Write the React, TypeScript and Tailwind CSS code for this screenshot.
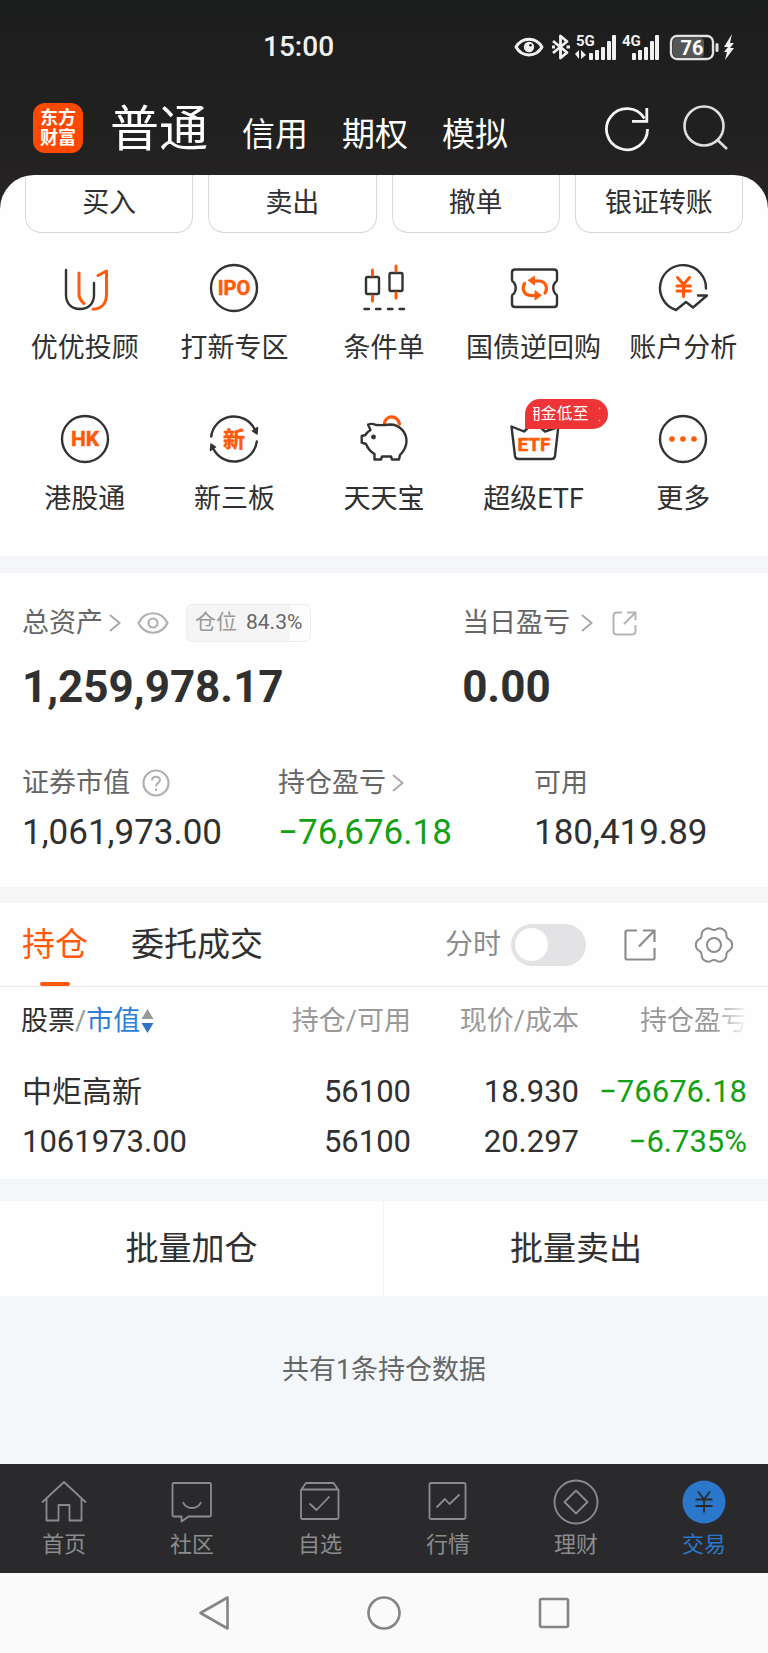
import { useState, type ReactNode } from 'react';
import clsx from 'clsx';

const INK = '#333333';
const ORANGE = '#ff5a0a';

/* ---------- status bar ---------- */

function SignalBars({ x }: { x: number }) {
  return (
    <g fill="#f1f1f1">
      <rect x={x} y={20} width={4} height={7} rx={1} />
      <rect x={x + 6} y={17} width={4} height={10} rx={1} />
      <rect x={x + 12} y={14} width={4} height={13} rx={1} />
      <rect x={x + 18} y={8} width={4} height={19} rx={1} />
      <rect x={x + 23} y={2} width={4} height={25} rx={1} />
    </g>
  );
}

function StatusBar() {
  return (
    <div className="flex h-[94px] items-center justify-between pr-[33px] pl-[263px] text-[#f1f1f1]">
      <span className="text-[28px] leading-8 font-medium">15:00</span>
      <div className="flex items-center">
        <svg width="30" height="20" viewBox="0 0 30 20" fill="none">
          <path d="M2 10C8 -0.5 22 -0.5 28 10C22 20.500 8 20.500 2 10Z" stroke="#f1f1f1" strokeWidth="3" strokeLinejoin="round" />
          <circle cx="15" cy="10" r="5.200" fill="#f1f1f1" />
          <circle cx="16.500" cy="8.200" r="1.300" fill="#1b1d1c" />
        </svg>
        <svg className="ml-[7px]" width="20" height="28" viewBox="0 0 20 28" fill="none" stroke="#f1f1f1" strokeWidth="2.800" strokeLinejoin="round">
          <path d="M2 8L16 19.500L9.500 25V3L16 8.500L2 20" />
          <path d="M1 14H4M15.500 14H19" />
        </svg>
        <svg className="ml-1" width="42" height="28" viewBox="0 0 42 28">
          <text x="1" y="13" fontSize="15" fontWeight="700" fill="#f1f1f1">5G</text>
          <path d="M0 21L4 17V26M6 17V26L11 22Z" fill="#f1f1f1" />
          <SignalBars x={14} />
        </svg>
        <svg className="ml-[5px]" width="40" height="28" viewBox="0 0 40 28">
          <text x="0" y="13" fontSize="15" fontWeight="700" fill="#f1f1f1">4G</text>
          <SignalBars x={10} />
        </svg>
        <svg className="ml-[7px]" width="50" height="28" viewBox="0 0 50 28">
          <rect x="2" y="3" width="42" height="23" rx="6" fill="#1b1d1c" stroke="#e2e2e2" strokeWidth="2.400" />
          <rect x="4" y="5" width="31" height="19" rx="4" fill="#555756" />
          <rect x="46.500" y="10" width="3" height="9" rx="1.500" fill="#e2e2e2" />
          <text x="23" y="21.500" fontSize="20" fontWeight="700" fill="#ffffff" textAnchor="middle">76</text>
        </svg>
        <svg className="ml-1" width="12" height="28" viewBox="0 0 12 28" fill="#f1f1f1">
          <path d="M9 1L1 14H5L1 19H4L2 27L11 15H7L11 10H7Z" />
        </svg>
      </div>
    </div>
  );
}

/* ---------- header ---------- */

function Header() {
  return (
    <header className="flex h-[68px] items-center pr-[40px] pl-[33px] text-white">
      <div className="grid h-[50px] w-[50px] shrink-0 content-center rounded-xl bg-[#ff4800] text-center text-[18px] leading-5 font-bold">
        <span>东方</span>
        <span>财富</span>
      </div>
      <nav className="flex items-baseline gap-[34px] pt-2 pl-[27px] text-[33px] leading-[60px] whitespace-nowrap">
        <a href="#normal" className="text-[49px]">普通</a>
        <a href="#credit">信用</a>
        <a href="#option">期权</a>
        <a href="#mock">模拟</a>
      </nav>
      <div className="ml-auto flex items-center gap-[31px]">
        <button type="button" aria-label="刷新">
          <svg width="48" height="48" viewBox="0 0 48 48" fill="none" stroke="#f5f5f5" strokeWidth="2.800">
            <path d="M44.500 25A20.500 20.500 0 1 1 41.500 14.500" />
            <path d="M43.800 4V17.300H29" />
          </svg>
        </button>
        <button type="button" aria-label="搜索">
          <svg width="46" height="48" viewBox="0 0 46 48" fill="none" stroke="#dedede" strokeWidth="2.600">
            <circle cx="22" cy="22" r="19.500" />
            <path d="M35.500 36L45 45" />
          </svg>
        </button>
      </div>
    </header>
  );
}

/* ---------- shortcuts ---------- */

function ShortcutIcon({ children }: { children: ReactNode }) {
  return (
    <svg width="56" height="56" viewBox="0 0 56 56" fill="none" stroke={INK} strokeWidth="2.400" strokeLinecap="round" strokeLinejoin="round">
      {children}
    </svg>
  );
}

function IconText({ size, y, children }: { size: number; y: number; children: string }) {
  return (
    <text x="28" y={y} fontSize={size} fontWeight="700" fill={ORANGE} stroke={ORANGE} strokeWidth="0.500" textAnchor="middle">
      {children}
    </text>
  );
}

const shortcuts: { label: string; icon: ReactNode; badge?: string }[] = [
  {
    label: '优优投顾',
    icon: (
      <>
        <path d="M9 10V35C9 44 15 49 23 49C31 49 37 44 37 35V23" />
        <g stroke={ORANGE} strokeWidth="3">
          <path d="M22 13V34C22 38 24 41 27 43.500" />
          <path d="M41 15.500L49.500 11V34C49.500 43 45 49 36 49.200" />
        </g>
      </>
    ),
  },
  {
    label: '打新专区',
    icon: (
      <>
        <circle cx="28" cy="28" r="23" />
        <IconText size={20} y={35}>IPO</IconText>
      </>
    ),
  },
  {
    label: '条件单',
    icon: (
      <>
        <rect x="10" y="17" width="13" height="17" rx="1.500" />
        <rect x="33.500" y="13" width="13" height="18" rx="1.500" />
        <path d="M16.500 10V15M16.500 36V41M40 6V11M40 33V38" stroke={ORANGE} strokeWidth="3" />
        <path d="M8.500 49H13M20 49H24.500M32 49H36.500M43.500 49H48" />
      </>
    ),
  },
  {
    label: '国债逆回购',
    icon: (
      <>
        <path d="M9 9.500H48Q51 9.500 51 12.500V20Q51 21.500 49 22.500Q45.500 28 49 33.500Q51 34.500 51 36V44Q51 47 48 47H9Q6 47 6 44V36Q6 34.500 8 33.500Q11.500 28 8 22.500Q6 21.500 6 20V12.500Q6 9.500 9 9.500Z" />
        <g stroke={ORANGE} strokeWidth="3.200">
          <path d="M18.500 23.500C15 30 19 35.500 25 35.500H29" />
          <path d="M39 33C42.500 27 39 21 33 21H28" />
        </g>
        <path d="M29 31V40L35 35.500ZM28.500 16.500V25L22.500 20.500Z" fill={ORANGE} stroke={ORANGE} strokeWidth="1" />
      </>
    ),
  },
  {
    label: '账户分析',
    icon: (
      <>
        <path d="M51 28.500A23 23 0 1 0 21 50L31 42L38 47.500L52 35.500H43" />
        <path d="M22.500 17.500L28.500 24.500L34.500 17.500M28.500 24.500V36.500M22 26H35.500M22 31H35.500" stroke={ORANGE} strokeWidth="3" />
      </>
    ),
  },
  {
    label: '港股通',
    icon: (
      <>
        <circle cx="28" cy="28" r="23" />
        <IconText size={21} y={35}>HK</IconText>
      </>
    ),
  },
  {
    label: '新三板',
    icon: (
      <>
        <path d="M5.200 25.500A23 23 0 0 1 48.500 18M50.800 30.500A23 23 0 0 1 7.500 38" />
        <path d="M46.500 20L51.500 16.500L51 23ZM9.500 36L4.500 39.500L5 33Z" fill={INK} strokeWidth="1.500" />
        <IconText size={22} y={36}>新</IconText>
      </>
    ),
  },
  {
    label: '天天宝',
    icon: (
      <>
        <path d="M28.500 12C30 4 41 3.500 43.500 13" stroke={ORANGE} strokeWidth="3.200" />
        <path d="M12 13.500Q16 12 20 14Q26 14.500 34 13.500C44 13.500 51 22 50.500 31C50 37 47 41 44 44L43 48.500H36L35 45.500H26L25 48.500H18.500V43C15 41 12 38 10 33L5.700 31.500V25L9.500 24C10.500 22 12 20.500 14.500 19C14 17 12.500 15.500 12 13.500Z" fill="#fefefe" />
        <circle cx="17.500" cy="26" r="1.800" fill={INK} stroke={INK} strokeWidth="1.200" />
      </>
    ),
  },
  {
    label: '超级ETF',
    badge: '佣金低至',
    icon: (
      <>
        <path d="M5.500 15.500L9 45Q9.500 48 12.500 48H45.500Q48.500 48 49 45L52.300 16L39 20.500L28.500 11L18 20.500Z" />
        <IconText size={19} y={40}>ETF</IconText>
      </>
    ),
  },
  {
    label: '更多',
    icon: (
      <>
        <circle cx="28" cy="28" r="23" />
        <g fill={ORANGE} stroke="none">
          <circle cx="17" cy="28" r="2.800" />
          <circle cx="28" cy="28" r="2.800" />
          <circle cx="39" cy="28" r="2.800" />
        </g>
      </>
    ),
  },
];

function PromoBadge({ text }: { text: string }) {
  return (
    <span className="absolute -top-3 left-[19px] flex h-[30px] w-[83px] items-center rounded-full rounded-bl-none bg-[#ee3436] pl-2 text-white">
      {/* marquee, text scrolls out on the left */}
      <span className="flex w-[56px] justify-end overflow-hidden text-base leading-5 whitespace-nowrap">{text}</span>
      <svg className="ml-[9px]" width="3" height="15" viewBox="0 0 3 15" fill="#ffb35c">
        <circle cx="1.500" cy="1.500" r="0.900" />
        <circle cx="1.500" cy="13.500" r="0.900" />
      </svg>
    </span>
  );
}

function Shortcuts() {
  return (
    <div className="grid grid-cols-5 gap-y-[45px] px-[10px] pt-[27px] pb-[39px]">
      {shortcuts.map(({ label, icon, badge }) => (
        <a key={label} href="#shortcut" className="flex flex-col items-center gap-[14px]">
          <span className="relative">
            <ShortcutIcon>{icon}</ShortcutIcon>
            {badge && <PromoBadge text={badge} />}
          </span>
          <span className="text-[27px] leading-9 whitespace-nowrap">{label}</span>
        </a>
      ))}
    </div>
  );
}

/* ---------- assets ---------- */

function Chevron() {
  return (
    <svg width="12" height="18" viewBox="0 0 12 18" fill="none" stroke="#aaaaaa" strokeWidth="2">
      <path d="M1 1L10.500 9L1 17" />
    </svg>
  );
}

function ShareIcon({ size, color }: { size: number; color: string }) {
  return (
    <svg width={size} height={size} viewBox="0 0 32 32" fill="none" stroke={color} strokeWidth="2.200">
      <path d="M13 1.500H3Q1.500 1.500 1.500 3V29Q1.500 30.500 3 30.500H29Q30.500 30.500 30.500 29V19" />
      <path d="M19 1.500H30.500V13M30 2L15 17.500" />
    </svg>
  );
}

function RoundShareIcon() {
  return (
    <svg width="25" height="25" viewBox="0 0 25 25" fill="none" stroke="#b4b4b4" strokeWidth="2">
      <path d="M10 1.500H5Q1.500 1.500 1.500 5V20Q1.500 23.500 5 23.500H20Q23.500 23.500 23.500 20V14" />
      <path d="M15 1.500H23.500V9M23 2L12 13" />
    </svg>
  );
}

function Assets() {
  return (
    <section className="pt-[31px] pb-[34px] text-[27px] text-[#666666]">
      <div className="grid grid-cols-[59fr_41fr] pl-[22px]">
        <div>
          <div className="flex h-[38px] items-center">
            <a href="#assets" className="flex items-center gap-[6px]">
              总资产 <Chevron />
            </a>
            <button type="button" aria-label="隐藏金额" className="ml-4">
              <svg width="32" height="24" viewBox="0 0 32 24" fill="none" stroke="#b0b0b0" strokeWidth="2.200">
                <path d="M1.500 12C8 -1 24 -1 30.500 12C24 25 8 25 1.500 12Z" />
                <circle cx="16" cy="12" r="4.500" />
              </svg>
            </button>
            <span className="ml-[17px] flex h-[38px] items-center gap-[9px] rounded-md border border-[#ececec] bg-linear-to-r from-[#f5f5f5] from-84% to-[#fdfdfd] to-84% px-2 text-[21px]">
              <span className="text-[#999999]">仓位</span> 84.3%
            </span>
          </div>
          <p className="mt-[21px] text-[44px] leading-[48px] font-bold text-[#303030]">1,259,978.17</p>
        </div>
        <div>
          <div className="flex h-[38px] items-center">
            <a href="#today" className="flex items-center gap-[11px]">
              当日盈亏 <Chevron />
            </a>
            <button type="button" aria-label="分享" className="ml-[19px]">
              <RoundShareIcon />
            </button>
          </div>
          <p className="mt-[21px] text-[44px] leading-[48px] font-bold text-[#303030]">0.00</p>
        </div>
      </div>

      <div className="mt-[54px] grid grid-cols-3">
        <div className="pl-[22px]">
          <div className="flex h-9 items-center gap-3">
            证券市值
            <button type="button" aria-label="说明">
              <svg width="28" height="28" viewBox="0 0 28 28" fill="none" stroke="#b0b0b0" strokeWidth="2.200">
                <circle cx="14" cy="14" r="12.500" />
                <path d="M10 11.500C10 6.500 18 6.500 18 11C18 14 14 13.800 14 17.500M14 19.500V22" strokeWidth="2" />
              </svg>
            </button>
          </div>
          <p className="mt-3 text-[35px] leading-10 text-[#303030]">1,061,973.00</p>
        </div>
        <div className="pl-[22px]">
          <a href="#profit" className="flex h-9 items-center gap-[6px]">
            持仓盈亏 <Chevron />
          </a>
          <p className="mt-3 text-[35px] leading-10 text-[#14a014]">−76,676.18</p>
        </div>
        <div className="pl-[22px]">
          <div className="flex h-9 items-center">可用</div>
          <p className="mt-3 text-[35px] leading-10 text-[#303030]">180,419.89</p>
        </div>
      </div>
    </section>
  );
}

/* ---------- positions ---------- */

// six soft lobes around the centre
const gearPath =
  Array.from({ length: 72 }, (_, i) => {
    const a = (i * Math.PI) / 36;
    const r = 16.8 + 1.6 * Math.cos(6 * a) - 0.3 * Math.cos(12 * a);
    return `${i ? 'L' : 'M'}${(20 + r * Math.cos(a)).toFixed(2)} ${(20 + r * Math.sin(a)).toFixed(2)}`;
  }).join('') + 'Z';

function PositionTabs() {
  const [timeline, setTimeline] = useState(false);

  return (
    <div className="flex h-[84px] items-stretch border-b border-[#e6e6e6] pr-[34px] pl-[22px] text-[33px]">
      <button type="button" className="relative text-[#ff5a0a]">
        持仓
        <span className="absolute bottom-0 left-1/2 h-[4px] w-[30px] -translate-x-1/2 rounded-full bg-[#ff5a0a]" />
      </button>
      <button type="button" className="ml-[43px]">委托成交</button>
      <div className="ml-auto flex items-center">
        <label className="flex items-center gap-[10px] text-[28px] text-[#8c8c8c]">
          分时
          <input
            type="checkbox"
            role="switch"
            checked={timeline}
            onChange={(e) => setTimeline(e.target.checked)}
            className="flex h-[42px] w-[75px] appearance-none items-center rounded-full bg-[#e3e3e5] px-1 before:h-[33px] before:w-[33px] before:rounded-full before:bg-white before:content-[''] checked:justify-end checked:bg-[#ff5a0a]"
          />
        </label>
        <button type="button" aria-label="分享" className="ml-[38px]">
          <ShareIcon size={32} color="#8c8c8c" />
        </button>
        <button type="button" aria-label="设置" className="ml-[38px]">
          <svg width="40" height="40" viewBox="0 0 40 40" fill="none" stroke="#8c8c8c" strokeWidth="2" strokeLinejoin="round">
            <path d={gearPath} />
            <circle cx="20" cy="20" r="7" />
          </svg>
        </button>
      </div>
    </div>
  );
}

function PositionTable() {
  return (
    <table className="w-full table-fixed text-right">
      <colgroup>
        <col className="w-[31%]" />
        <col />
        <col className="w-[168px]" />
        <col className="w-[189px]" />
      </colgroup>
      <thead className="h-[68px] text-[27px] text-[#999999]">
        <tr>
          <th className="pl-[21px] text-left font-normal">
            <button type="button" className="flex items-center">
              <span className="text-[#303030]">股票</span>/<span className="text-[#2f7fd6]">市值</span>
              <svg className="ml-px" width="13" height="26" viewBox="0 0 13 26">
                <path d="M6.500 1L12.500 11H0.500Z" fill="#999999" />
                <path d="M6.500 25L12.500 15H0.500Z" fill="#2f74c4" />
              </svg>
            </button>
          </th>
          <th className="font-normal">持仓/可用</th>
          <th className="font-normal">现价/成本</th>
          <th className="pr-[20px] font-normal">
            <span className="[mask-image:linear-gradient(to_right,black_68%,transparent)]">持仓盈亏</span>
          </th>
        </tr>
      </thead>
      <tbody className="text-[31px] leading-[50px]">
        <tr>
          <td className="pt-3 pb-3 pl-[22px] text-left">
            <p className="text-[30px]">中炬高新</p>
            <p>1061973.00</p>
          </td>
          <td className="pt-3 pb-3">
            <p>56100</p>
            <p>56100</p>
          </td>
          <td className="pt-3 pb-3">
            <p>18.930</p>
            <p>20.297</p>
          </td>
          <td className="pt-3 pr-[21px] pb-3 text-[#14a014]">
            <p>−76676.18</p>
            <p>−6.735%</p>
          </td>
        </tr>
      </tbody>
    </table>
  );
}

/* ---------- bottom navigation ---------- */

const navItems: { label: string; icon: ReactNode; active?: boolean }[] = [
  {
    label: '首页',
    icon: (
      <>
        <path d="M2 24.500L24 4L46 24.500" />
        <path d="M6.500 21V42.500H18.500V27H29.500V42.500H41.500V21" />
      </>
    ),
  },
  {
    label: '社区',
    icon: (
      <>
        <path d="M6 5H41.500Q43 5 43 6.500V37Q43 38.500 41.500 38.500H20.500L13.500 43.500V38.500H6Q4.500 38.500 4.500 37V6.500Q4.500 5 6 5Z" />
        <path d="M15 24C18 32 30 32 33 24" />
      </>
    ),
  },
  {
    label: '自选',
    icon: (
      <>
        <path d="M5 12L10 5H37.500L42.500 12V39.500Q42.500 41 41 41H6.500Q5 41 5 39.500ZM5 11.500H42.500" />
        <path d="M13.500 25.500L20.500 32L33.500 18.500" />
      </>
    ),
  },
  {
    label: '行情',
    icon: (
      <>
        <rect x="5.500" y="5" width="36" height="36" rx="1.500" />
        <path d="M12.500 29.500L21 21L25.500 26L35.500 16.500" />
      </>
    ),
  },
  {
    label: '理财',
    icon: (
      <>
        <circle cx="24" cy="24" r="21.500" />
        <path d="M24 12.500L35.500 24L24 35.500L12.500 24Z" />
      </>
    ),
  },
  {
    label: '交易',
    active: true,
    icon: (
      <>
        <circle cx="24" cy="24" r="21.500" fill="#2b77cb" stroke="none" />
        <path d="M18 13.500L24 21.500L30 13.500M24 21.500V34.500M15.500 21.500H32.500M15.500 28H32.500" stroke="#2a2a2c" />
      </>
    ),
  },
];

function BottomNav() {
  return (
    <nav className="grid grid-cols-6 bg-[#2a2a2c] pt-[14px] pb-[14px]">
      {navItems.map(({ label, icon, active }) => (
        <a
          key={label}
          href="#nav"
          className={clsx('flex flex-col items-center gap-[5px] text-[22px] leading-7', active ? 'text-[#2b77cb]' : 'text-[#8c8c8e]')}
        >
          <svg width="48" height="48" viewBox="0 0 48 48" fill="none" stroke="currentColor" strokeWidth="1.800" strokeLinejoin="round">
            {icon}
          </svg>
          {label}
        </a>
      ))}
    </nav>
  );
}

function SystemNav() {
  return (
    <div className="flex h-20 items-center justify-center bg-[#fafafb]">
      <button type="button" aria-label="返回" className="flex w-[170px] justify-center">
        <svg width="36" height="36" viewBox="0 0 36 36" fill="none" stroke="#858585" strokeWidth="2.600" strokeLinejoin="round">
          <path d="M4.500 18L31.500 2.500V33.500Z" />
        </svg>
      </button>
      <button type="button" aria-label="主页" className="flex w-[170px] justify-center">
        <svg width="36" height="36" viewBox="0 0 36 36" fill="none" stroke="#858585" strokeWidth="2.600">
          <circle cx="18" cy="18" r="15.500" />
        </svg>
      </button>
      <button type="button" aria-label="最近任务" className="flex w-[170px] justify-center">
        <svg width="36" height="36" viewBox="0 0 36 36" fill="none" stroke="#858585" strokeWidth="2.600">
          <rect x="4" y="4" width="28" height="28" rx="1.500" />
        </svg>
      </button>
    </div>
  );
}

export default function App() {
  return (
    <div className="bg-[#f3f7f9] font-[Roboto,'Noto_Sans_CJK_SC',sans-serif] text-[#303030]">
      <div className="bg-linear-to-b from-[#1b1d1c] to-[#242222] to-[175px]">
        <StatusBar />
        <Header />
        <main className="mt-[13px] overflow-hidden rounded-t-[34px] bg-[#fefefe]">
          <div className="grid grid-cols-4 gap-[15px] px-[25px] text-[27px]">
            {['买入', '卖出', '撤单', '银证转账'].map((label) => (
              <button key={label} type="button" className="h-[58px] rounded-b-2xl border border-t-0 border-[#d8d8d8]">
                {label}
              </button>
            ))}
          </div>
          <Shortcuts />
          <div className="h-[17px] bg-[#f5f6f9]" />
          <Assets />
          <div className="h-4 bg-[#f6f6f6]" />
          <PositionTabs />
          <PositionTable />
        </main>
      </div>

      <div className="mt-[22px] grid h-[95px] grid-cols-2 divide-x divide-[#f3f3f3] bg-[#fefefe] text-[33px]">
        <button type="button">批量加仓</button>
        <button type="button">批量卖出</button>
      </div>
      <p className="pt-[54px] pb-[74px] text-center text-[27px] leading-10 text-[#666666]">共有1条持仓数据</p>

      <BottomNav />
      <SystemNav />
    </div>
  );
}
